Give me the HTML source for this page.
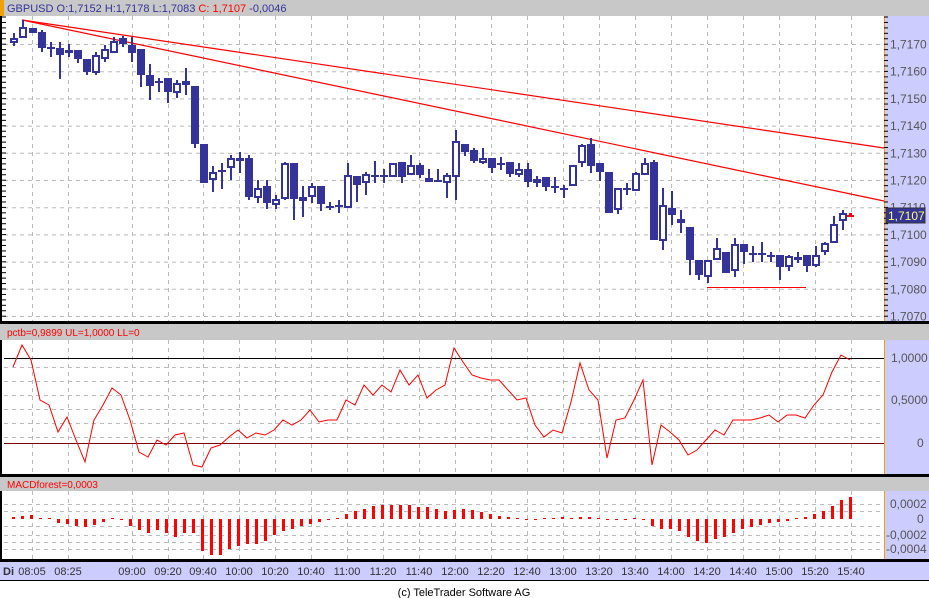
<!DOCTYPE html>
<html><head><meta charset="utf-8"><style>
html,body{margin:0;padding:0;background:#fff;width:929px;height:598px;overflow:hidden}
svg{display:block}
text{font-family:"Liberation Sans",sans-serif}
</style></head><body>
<svg id="s" width="929" height="598" xmlns="http://www.w3.org/2000/svg">
<rect x="0" y="0" width="929" height="598" fill="#fff"/>
<rect x="0" y="0" width="929" height="16" fill="#c8c8c8"/>
<rect x="0" y="0" width="4" height="16" fill="#f0a000"/>
<text x="7" y="12" font-size="11" fill="#333399">GBPUSD O:1,7152 H:1,7178 L:1,7083 <tspan fill="#ff0000">C: 1,7107</tspan> -0,0046</text>
<rect x="884" y="16" width="45" height="306" fill="#ccccff"/>
<rect x="884" y="16" width="1" height="306" fill="#f0a000"/>
<rect x="0" y="16" width="2" height="306" fill="#000"/>
<rect x="0" y="321" width="929" height="3" fill="#000"/>
<rect x="0" y="324" width="929" height="16" fill="#c8c8c8"/>
<text x="7" y="336" font-size="10" fill="#ff0000">pctb=0,9899 UL=1,0000 LL=0</text>
<rect x="884" y="340" width="45" height="135" fill="#ccccff"/>
<rect x="884" y="340" width="1" height="135" fill="#f0a000"/>
<rect x="0" y="340" width="2" height="135" fill="#000"/>
<rect x="0" y="474" width="929" height="3" fill="#000"/>
<rect x="0" y="477" width="929" height="14" fill="#c8c8c8"/>
<text x="7" y="488" font-size="10" fill="#ff0000">MACDforest=0,0003</text>
<rect x="884" y="491" width="45" height="69" fill="#ccccff"/>
<rect x="884" y="491" width="1" height="69" fill="#f0a000"/>
<rect x="0" y="491" width="2" height="69" fill="#000"/>
<rect x="0" y="559" width="929" height="3" fill="#000"/>
<rect x="0" y="562" width="929" height="18" fill="#ccccff"/>
<rect x="0" y="580" width="929" height="1" fill="#000"/>
<g id="g"></g>
<text x="464" y="596" font-size="11" fill="#000" text-anchor="middle">(c) TeleTrader Software AG</text>
</svg>
<script>
var g=document.getElementById('g'),h='';
var vx=[32,68,132,168,203,239,275,311,347,383,419,455,491,527,563,599,635,671,707,743,779,815,851];
var tl=['08:05','08:25','09:00','09:20','09:40','10:00','10:20','10:40','11:00','11:20','11:40','12:00','12:20','12:40','13:00','13:20','13:40','14:00','14:20','14:40','15:00','15:20','15:40'];
var D='stroke="#bbb" stroke-width="1" stroke-dasharray="4,4"';
vx.forEach(function(x,i){
 h+='<line x1="'+(x+.5)+'" y1="16" x2="'+(x+.5)+'" y2="321" '+D+'/>';
 h+='<line x1="'+(x+.5)+'" y1="340" x2="'+(x+.5)+'" y2="474" '+D+'/>';
 h+='<line x1="'+(x+.5)+'" y1="491" x2="'+(x+.5)+'" y2="559" '+D+'/>';
 h+='<text x="'+x+'" y="575" font-size="11" fill="#333" text-anchor="middle">'+tl[i]+'</text>';
});
h+='<text x="3" y="575" font-size="11" font-weight="bold" fill="#333">Di</text>';
for(var k=0;k<=10;k++){var y=44+k*27.2;
 h+='<line x1="4" y1="'+(y+.5)+'" x2="884" y2="'+(y+.5)+'" '+D+'/>';
 h+='<text x="890" y="'+(y+4.5)+'" font-size="12" fill="#555">1,7'+String(170-k*10).padStart(3,'0')+'</text>';
}
for(var y=17;y<321;y+=5.44){h+='<line x1="884" y1="'+y+'" x2="888" y2="'+y+'" stroke="#000"/><line x1="2" y1="'+y+'" x2="6" y2="'+y+'" stroke="#000"/>';}
[367,381,395,409,423,437].forEach(function(y){h+='<line x1="4" y1="'+(y+.5)+'" x2="884" y2="'+(y+.5)+'" '+D+'/>';});
[504,511,526,535,542,549].forEach(function(y){h+='<line x1="4" y1="'+(y+.5)+'" x2="884" y2="'+(y+.5)+'" '+D+'/>';});
var C=[[13,38,43,33,46,1],[22,27,38,20,38,1],[32,28,33,28,33,0],[41,32,48,30,52,0],[50,47,48,42,57,2],[59,48,55,42,79,0],[68,50,53,44,57,1],[77,50,59,50,63,0],[86,59,72,59,75,0],[95,55,73,52,75,1],[104,49,59,45,62,1],[113,41,53,37,53,1],[122,38,44,36,47,0],[131,45,53,37,62,0],[140,49,75,49,87,0],[149,75,86,64,100,0],[158,81,82,78,92,2],[167,78,92,78,103,0],[176,83,93,80,98,1],[185,81,85,68,95,0],[194,86,144,86,148,0],[203,144,183,144,183,0],[212,172,180,166,192,1],[221,170,171,163,189,2],[230,158,168,155,180,1],[239,158,161,152,173,1],[248,158,197,155,200,0],[257,188,198,180,203,1],[266,186,203,180,209,0],[275,199,205,195,209,1],[284,163,199,162,200,1],[293,163,199,163,220,0],[302,197,201,186,217,1],[311,186,197,183,203,1],[320,186,204,186,211,0],[329,206,207,202,210,2],[338,205,206,200,213,2],[347,175,208,163,208,1],[356,176,185,176,202,0],[365,174,183,172,195,1],[374,175,176,161,183,2],[383,175,176,169,183,2],[392,163,177,163,177,1],[401,162,177,162,183,0],[410,165,175,155,175,1],[419,165,175,163,178,0],[428,178,182,169,182,0],[437,180,181,169,181,2],[446,175,183,173,198,1],[455,141,177,130,200,1],[464,144,152,144,156,0],[473,150,161,148,163,0],[482,158,163,148,164,1],[491,158,168,158,173,0],[500,163,167,157,170,2],[509,162,174,162,177,0],[518,169,175,163,177,1],[527,169,182,163,187,0],[536,179,183,176,187,1],[545,177,187,177,191,0],[554,186,187,177,193,2],[563,188,189,185,198,2],[572,165,186,165,186,1],[581,145,163,144,167,1],[590,144,166,138,173,0],[599,163,172,163,181,0],[608,172,213,172,213,0],[617,188,210,188,214,1],[626,188,189,183,195,2],[635,173,191,172,191,1],[644,163,175,158,175,1],[653,162,240,160,240,0],[662,205,241,188,250,1],[671,208,215,191,225,0],[680,219,223,210,233,0],[689,227,260,227,275,0],[698,260,275,260,280,0],[707,260,277,260,283,1],[716,248,260,238,260,1],[725,252,273,252,273,0],[734,244,271,238,277,1],[743,244,252,244,264,0],[752,253,254,246,262,2],[761,253,254,242,262,2],[770,255,256,252,262,2],[779,255,267,255,280,0],[788,256,267,255,271,1],[797,257,260,252,263,1],[806,255,266,255,272,0],[815,255,266,246,267,1],[824,243,252,242,255,1],[833,224,243,216,243,1],[842,213,221,210,230,1]];
var B='#333399';
h+='<line x1="22" y1="20" x2="884" y2="148" stroke="#ff0000" stroke-width="1.2"/>';
h+='<line x1="22" y1="20" x2="884" y2="201" stroke="#ff0000" stroke-width="1.2"/>';
h+='<line x1="707" y1="287.5" x2="806" y2="287.5" stroke="#ff0000" stroke-width="1"/>';
C.forEach(function(c){
 var x=c[0];
 h+='<rect x="'+x+'" y="'+c[3]+'" width="2" height="'+(c[4]-c[3])+'" fill="'+B+'"/>';
 if(c[5]==2){h+='<rect x="'+(x-3)+'" y="'+c[1]+'" width="8" height="2" fill="'+B+'"/>';}
 else if(c[5]==1){h+='<rect x="'+(x-2)+'" y="'+(c[1]+1)+'" width="6" height="'+Math.max(1,c[2]-c[1]-2)+'" fill="#fff" stroke="'+B+'" stroke-width="2"/>';}
 else{h+='<rect x="'+(x-3)+'" y="'+c[1]+'" width="8" height="'+(c[2]-c[1])+'" fill="'+B+'"/>';}
});
h+='<rect x="847" y="215" width="7" height="2" fill="#ff0000"/><rect x="849" y="213" width="3" height="2" fill="#ff0000"/>';
h+='<rect x="886" y="208" width="39" height="15" fill="#333399" stroke="#333" stroke-width="1"/><text x="888" y="220" font-size="12" fill="#ffff66">1,7107</text>';
h+='<line x1="4" y1="358.5" x2="884" y2="358.5" stroke="#000"/><line x1="4" y1="443.5" x2="884" y2="443.5" stroke="#800000"/>';
h+='<text x="891" y="362" font-size="12" fill="#555">1,0000</text><text x="891" y="404" font-size="12" fill="#555">0,5000</text><text x="917" y="447" font-size="12" fill="#555">0</text>';
var P=[367,345,360,400,405,432,417,440,462,420,405,388,395,420,452,457,440,445,435,433,465,467,448,445,437,430,438,433,435,430,420,425,420,410,422,420,420,400,405,385,395,385,392,370,385,375,398,390,385,348,362,375,378,380,380,390,400,398,425,437,430,433,402,363,390,400,458,420,418,400,380,465,425,432,440,455,450,440,430,435,420,420,420,418,415,422,415,415,418,405,395,372,355,360];
var pts=P.map(function(y,i){return (13+9*i)+','+y}).join(' ');
h+='<polyline points="'+pts+'" fill="none" stroke="#ff0000" stroke-width="1"/>';
var M=[2,3,4,1,1,-4,-5,-7,-8,-6,-3,1,-1,-7,-11,-14,-11,-14,-18,-14,-14,-32,-36,-36,-30,-27,-25,-25,-22,-16,-12,-10,-7,-5,-3,-1,1,5,8,10,13,14,14,14,14,12,12,10,8,9,10,9,7,5,3,2,1,-1,-1,0,1,2,1,2,2,1,-1,-1,-1,0,-1,-7,-10,-10,-12,-18,-22,-24,-20,-18,-14,-10,-8,-6,-4,-3,-2,0,2,5,8,13,19,22];
M.forEach(function(v,i){var x=12+9*i;var a=Math.abs(v)||1;var y=v>=0?519-a:519;h+='<rect x="'+x+'" y="'+y+'" width="3" height="'+a+'" fill="#ff0000"/>';});
h+='<text x="890" y="508" font-size="12" fill="#555">0,0002</text><text x="917" y="523" font-size="12" fill="#555">0</text><text x="886" y="539" font-size="12" fill="#555">-0,0002</text><text x="886" y="553" font-size="12" fill="#555">-0,0004</text>';
g.innerHTML=h;
</script>
</body></html>
